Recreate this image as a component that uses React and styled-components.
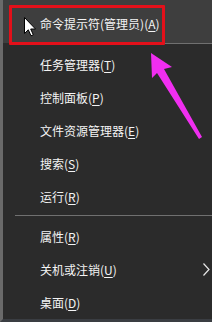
import React from "react";
import styled, { createGlobalStyle } from "styled-components";

const Global = createGlobalStyle`
  html, body { margin: 0; padding: 0; background: #2b2b2b; overflow: hidden; }
  #root { width: 212px; height: 322px; }
`;

const Menu = styled.div`
  position: relative;
  box-sizing: border-box;
  width: 212px;
  height: 322px;
  background: #2b2b2b;
  border-left: 3px solid #6a6a6a;
  border-bottom: 3px solid #3a3d42;
  font-family: "Noto Sans CJK SC", "Noto Sans", sans-serif;
  font-size: 12px;
  color: #f4f4f4;
  overflow: hidden;
`;

const Item = styled.div`
  box-sizing: border-box;
  display: flex;
  align-items: center;
  justify-content: space-between;
  height: ${(p) => p.$h || 33}px;
  padding: ${(p) => p.$pt || 0}px 2px 0 37px;
  background: ${(p) => (p.$active ? "#3e3e3e" : "transparent")};
  white-space: nowrap;
  line-height: 1;
`;

const Key = styled.u`
  text-decoration: underline;
  text-underline-offset: 2px;
`;

const Separator = styled.div`
  height: 1px;
  margin: ${(p) => p.$mt}px 0 ${(p) => p.$mb}px 12px;
  background: #707070;
`;

const RedBox = styled.div`
  position: absolute;
  left: 6px;
  top: 5px;
  width: 150px;
  height: 34px;
  border: 3px solid #e3101a;
  border-radius: 1px;
`;

const Overlay = styled.svg`
  position: absolute;
  left: ${(p) => p.$x}px;
  top: ${(p) => p.$y}px;
  overflow: visible;
`;

const Label = ({ text, k }) => (
  <span>
    {text}(<Key>{k}</Key>)
  </span>
);

export default function App() {
  return (
    <>
      <Global />
      <Menu>
        <Item $active $h={43} $pt={5}>
          <Label text="命令提示符(管理员)" k="A" />
        </Item>
        <Separator $mt={0} $mb={4} />
        <Item><Label text="任务管理器" k="T" /></Item>
        <Item><Label text="控制面板" k="P" /></Item>
        <Item><Label text="文件资源管理器" k="E" /></Item>
        <Item><Label text="搜索" k="S" /></Item>
        <Item><Label text="运行" k="R" /></Item>
        <Separator $mt={2} $mb={4} />
        <Item><Label text="属性" k="R" /></Item>
        <Item>
          <Label text="关机或注销" k="U" />
          <svg width="7" height="13" viewBox="0 0 7 13">
            <polyline points="0.5,0.5 6,6.5 0.5,12.5" fill="none" stroke="#e8e8e8" strokeWidth="1.2" />
          </svg>
        </Item>
        <Item><Label text="桌面" k="D" /></Item>

        <RedBox />
        <Overlay $x={21} $y={17} width="12" height="20" viewBox="0 0 12 20">
          <polygon points="0.5,0.5 0.5,16.5 4.3,12.8 7,18.8 9.3,17.8 6.7,12 11.5,12" fill="#ffffff" stroke="#000" strokeWidth="1" strokeLinejoin="round" />
        </Overlay>
        <Overlay $x={0} $y={0} width="209" height="319" viewBox="0 0 209 319">
          <polygon points="148,53 169,67 161,69 199,137 196,139 154,73 149,78" fill="#f02ef0" />
        </Overlay>
      </Menu>
    </>
  );
}
